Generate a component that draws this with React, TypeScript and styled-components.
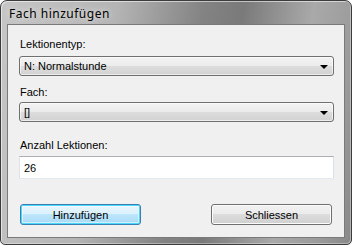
import React from "react"
import styled, { createGlobalStyle } from "styled-components"

const Global = createGlobalStyle`
  html, body {
    margin: 0;
    padding: 0;
    background: #ffffff;
  }
  * {
    box-sizing: border-box;
  }
`

const Window = styled.div`
  width: 352px;
  height: 245px;
  display: flex;
  flex-direction: column;
  padding: 0 6px 6px 6px;
  border: 1px solid #3c3c3c;
  border-radius: 7px 7px 5px 5px;
  background: linear-gradient(
    100deg,
    #c6c6c6 0%,
    #b4b4b4 30%,
    #838383 52%,
    #7a7a7a 62%,
    #a9a9a9 80%,
    #9a9a9a 92%,
    #888888 100%
  );
  box-shadow: inset 1px 1px 0 rgba(255, 255, 255, 0.55),
    inset -1px -1px 0 rgba(255, 255, 255, 0.35);
  overflow: hidden;
`

const TitleBar = styled.div`
  height: 23px;
  flex: none;
  display: flex;
  align-items: center;
  padding-left: 2px;
  padding-top: 1px;
`

const Title = styled.div`
  font-family: "Noto Sans", "DejaVu Sans", sans-serif;
  font-size: 12px;
  letter-spacing: 0.5px;
  color: #000;
  text-shadow: 0 0 6px rgba(255, 255, 255, 0.9);
`

const Client = styled.div`
  flex: 1;
  display: flex;
  flex-direction: column;
  background: #f0f0f0;
  border: 1px solid #7a7a7a;
  padding: 13px 10px 0 11px;
  font-family: "Liberation Sans", Arial, sans-serif;
  font-size: 11px;
  color: #000;
`

const Label = styled.div<{ $top?: number }>`
  height: 13px;
  line-height: 13px;
  margin-top: ${p => p.$top ?? 0}px;
  padding-left: 1px;
`

const Combo = styled.div<{ $top?: number }>`
  height: 20px;
  margin-top: ${p => p.$top ?? 0}px;
  display: flex;
  align-items: center;
  justify-content: space-between;
  padding: 0 5px 0 4px;
  border: 1px solid #707070;
  border-radius: 3px;
  background: linear-gradient(
    to bottom,
    #f3f3f3 0%,
    #ebebeb 49%,
    #dddddd 50%,
    #d2d2d2 100%
  );
  box-shadow: inset 0 0 0 1px rgba(255, 255, 255, 0.6);
`

const ComboText = styled.span`
  line-height: 13px;
`

const Arrow = styled.span`
  width: 0;
  height: 0;
  border-left: 4px solid transparent;
  border-right: 4px solid transparent;
  border-top: 4px solid #000;
  margin-top: 1px;
`

const Input = styled.div<{ $top?: number }>`
  height: 23px;
  margin-top: ${p => p.$top ?? 0}px;
  display: flex;
  align-items: center;
  padding-left: 4px;
  background: #fff;
  border: 1px solid #dbdfe6;
  border-top-color: #abadb3;
  border-left-color: #e2e3ea;
  border-right-color: #dbdfe6;
  border-bottom-color: #e3e9ef;
`

const Buttons = styled.div`
  display: flex;
  justify-content: space-between;
  margin-top: 25px;
  padding: 0 2px 0 1px;
`

const Button = styled.div<{ $default?: boolean }>`
  width: 121px;
  height: 21px;
  display: flex;
  align-items: center;
  justify-content: center;
  border-radius: 3px;
  border: 1px solid ${p => (p.$default ? "#3c7fb1" : "#707070")};
  background: ${p =>
    p.$default
      ? "linear-gradient(to bottom, #eaf6fd 0%, #d9f0fc 49%, #bee6fd 50%, #a7d9f5 100%)"
      : "linear-gradient(to bottom, #f2f2f2 0%, #ebebeb 49%, #dddddd 50%, #cfcfcf 100%)"};
  box-shadow: ${p =>
    p.$default
      ? "inset 0 0 0 1px #48d8fb, inset 0 0 0 2px rgba(255,255,255,0.5)"
      : "inset 0 0 0 1px #fcfcfc"};
`

const App: React.FC = () => {
  return (
    <>
      <Global />
      <Window>
        <TitleBar>
          <Title>Fach hinzufügen</Title>
        </TitleBar>
        <Client>
          <Label>Lektionentyp:</Label>
          <Combo $top={5}>
            <ComboText>N: Normalstunde</ComboText>
            <Arrow />
          </Combo>
          <Label $top={10}>Fach:</Label>
          <Combo $top={3}>
            <ComboText>[]</ComboText>
            <Arrow />
          </Combo>
          <Label $top={17}>Anzahl Lektionen:</Label>
          <Input $top={4}>26</Input>
          <Buttons>
            <Button $default>Hinzufügen</Button>
            <Button>Schliessen</Button>
          </Buttons>
        </Client>
      </Window>
    </>
  )
}

export default App
